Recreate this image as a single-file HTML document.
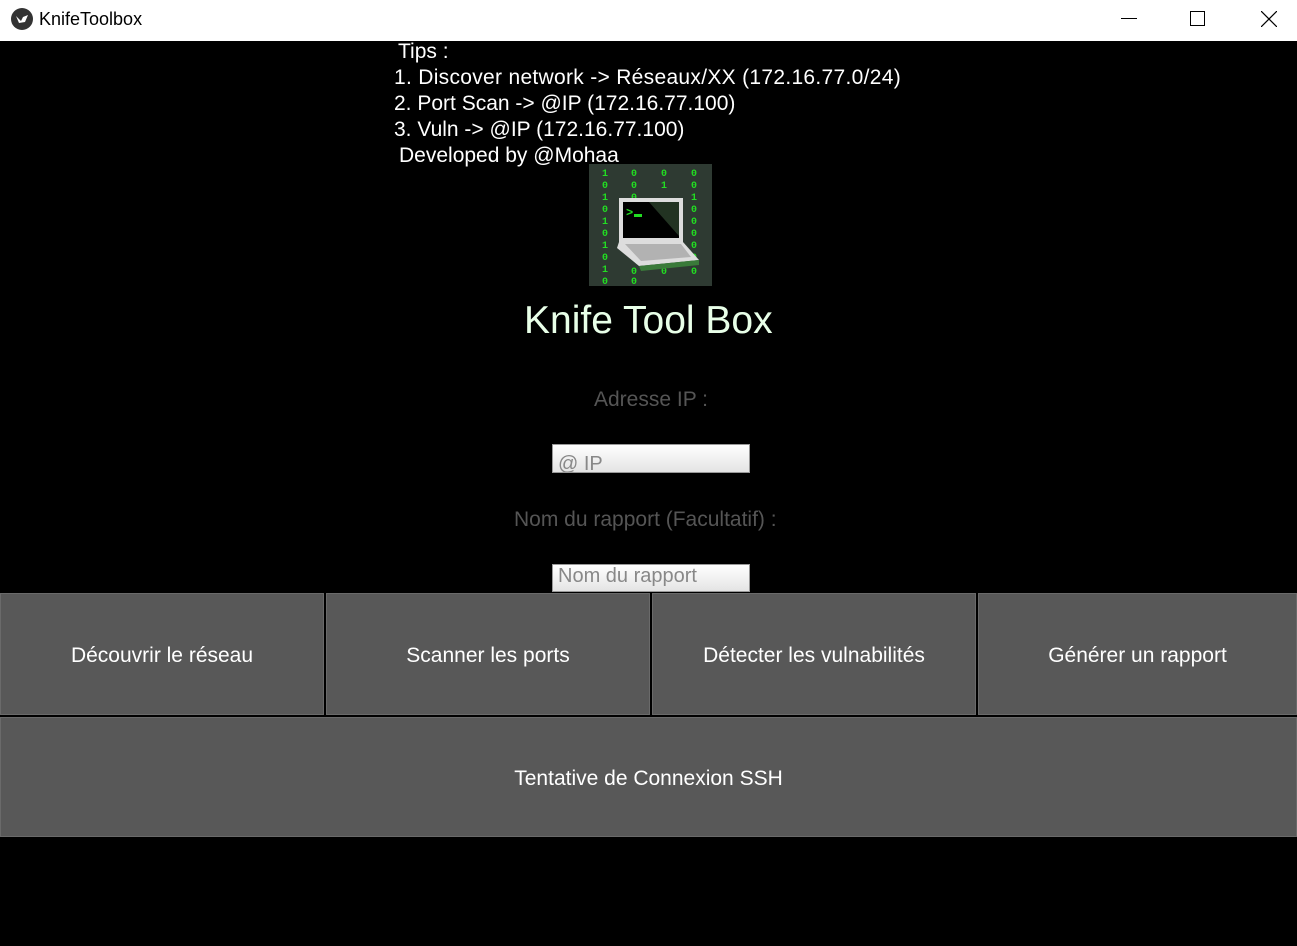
<!DOCTYPE html>
<html><head><meta charset="utf-8"><style>
*{margin:0;padding:0;box-sizing:border-box}
body{width:1297px;height:946px;background:#000;font-family:"Liberation Sans",sans-serif;position:relative;overflow:hidden}
.tb{position:absolute;left:0;top:0;width:1297px;height:41px;background:#fff}
.t{position:absolute;color:#fff;font-size:21px;white-space:nowrap}
.btn{position:absolute;background:#585858;border:1px solid #6a6a6a;color:#fff;font-size:21px;display:flex;align-items:center;justify-content:center;padding-top:4px}
.inp{position:absolute;left:552px;width:198px;background:linear-gradient(#fff,#e4e4e4);border:1px solid #999;color:#888;font-size:20px;overflow:hidden;line-height:1;padding-left:5px}
</style></head><body>
<div class="tb">
<svg style="position:absolute;left:11px;top:8px" width="22" height="22"><circle cx="11" cy="11" r="11" fill="#333"/><path d="M5 8 L10 13 L12 9 L17 7 L14 14 L8 15 Z" fill="#fff"/></svg>
<div style="position:absolute;left:39px;top:9px;font-size:18px;color:#000">KnifeToolbox</div>
<div style="position:absolute;left:1121px;top:18px;width:16px;height:1px;background:#000"></div>
<div style="position:absolute;left:1190px;top:11px;width:15px;height:15px;border:1px solid #000"></div>
<svg style="position:absolute;left:1261px;top:11px" width="16" height="16"><path d="M0 0L16 16M16 0L0 16" stroke="#000" stroke-width="1.2"/></svg>
</div>
<div class="t" style="left:398px;top:40px">Tips :</div>
<div class="t" style="left:394px;top:66px;letter-spacing:0.3px">1. Discover network -&gt; Réseaux/XX (172.16.77.0/24)</div>
<div class="t" style="left:394px;top:92px">2. Port Scan -&gt; @IP (172.16.77.100)</div>
<div class="t" style="left:394px;top:118px">3. Vuln -&gt; @IP (172.16.77.100)</div>
<div class="t" style="left:399px;top:144px">Developed by @Mohaa</div>
<svg style="position:absolute;left:589px;top:164px" width="123" height="122">
<rect width="123" height="122" fill="#2e3a32"/>
<g fill="#22dd22" font-family="Liberation Mono" font-size="10" font-weight="bold">
<text x="13" y="12">1</text><text x="13" y="24">0</text><text x="13" y="36">1</text><text x="13" y="48">0</text><text x="13" y="60">1</text><text x="13" y="72">0</text><text x="13" y="84">1</text><text x="13" y="96">0</text><text x="13" y="108">1</text><text x="13" y="120">0</text>
<text x="42" y="12">0</text><text x="42" y="24">0</text><text x="42" y="36">0</text><text x="42" y="110">0</text><text x="42" y="120">0</text>
<text x="72" y="12">0</text><text x="72" y="24">1</text><text x="72" y="110">0</text>
<text x="102" y="12">0</text><text x="102" y="24">0</text><text x="102" y="36">1</text><text x="102" y="48">0</text><text x="102" y="60">0</text><text x="102" y="72">0</text><text x="102" y="84">0</text><text x="102" y="96">0</text><text x="102" y="110">0</text>
</g>
<rect x="30" y="34" width="64" height="44" fill="#ddd"/>
<rect x="34" y="38" width="56" height="36" fill="#000"/>
<path d="M60 38 L90 38 L90 72 Z" fill="#223322"/>
<text x="37" y="52" fill="#22dd22" font-size="12" font-family="Liberation Mono" font-weight="bold">&gt;</text>
<rect x="45" y="50" width="8" height="3" fill="#22dd22"/>
<path d="M30 78 L94 78 L110 96 L50 102 L28 84 Z" fill="#ddd"/>
<path d="M36 80 L92 80 L102 93 L52 97 Z" fill="#888" opacity=".5"/>
<path d="M50 102 L110 96 L110 101 L52 107 Z" fill="#3a7a3a"/>
</svg>
<div class="t" style="left:524px;top:299px;font-size:39px;color:#e8ffe8">Knife Tool Box</div>
<div class="t" style="left:594px;top:388px;color:#555">Adresse IP :</div>
<div class="inp" style="top:444px;height:29px;padding-top:9px">@ IP</div>
<div class="t" style="left:514px;top:508px;color:#555">Nom du rapport (Facultatif) :</div>
<div class="inp" style="top:564px;height:28px;padding-top:1px">Nom du rapport</div>
<div class="btn" style="left:0;top:593px;width:324px;height:122px">Découvrir le réseau</div>
<div class="btn" style="left:326px;top:593px;width:324px;height:122px">Scanner les ports</div>
<div class="btn" style="left:652px;top:593px;width:324px;height:122px">Détecter les vulnabilités</div>
<div class="btn" style="left:978px;top:593px;width:319px;height:122px">Générer un rapport</div>
<div class="btn" style="left:0;top:717px;width:1297px;height:120px">Tentative de Connexion SSH</div>
</body></html>
